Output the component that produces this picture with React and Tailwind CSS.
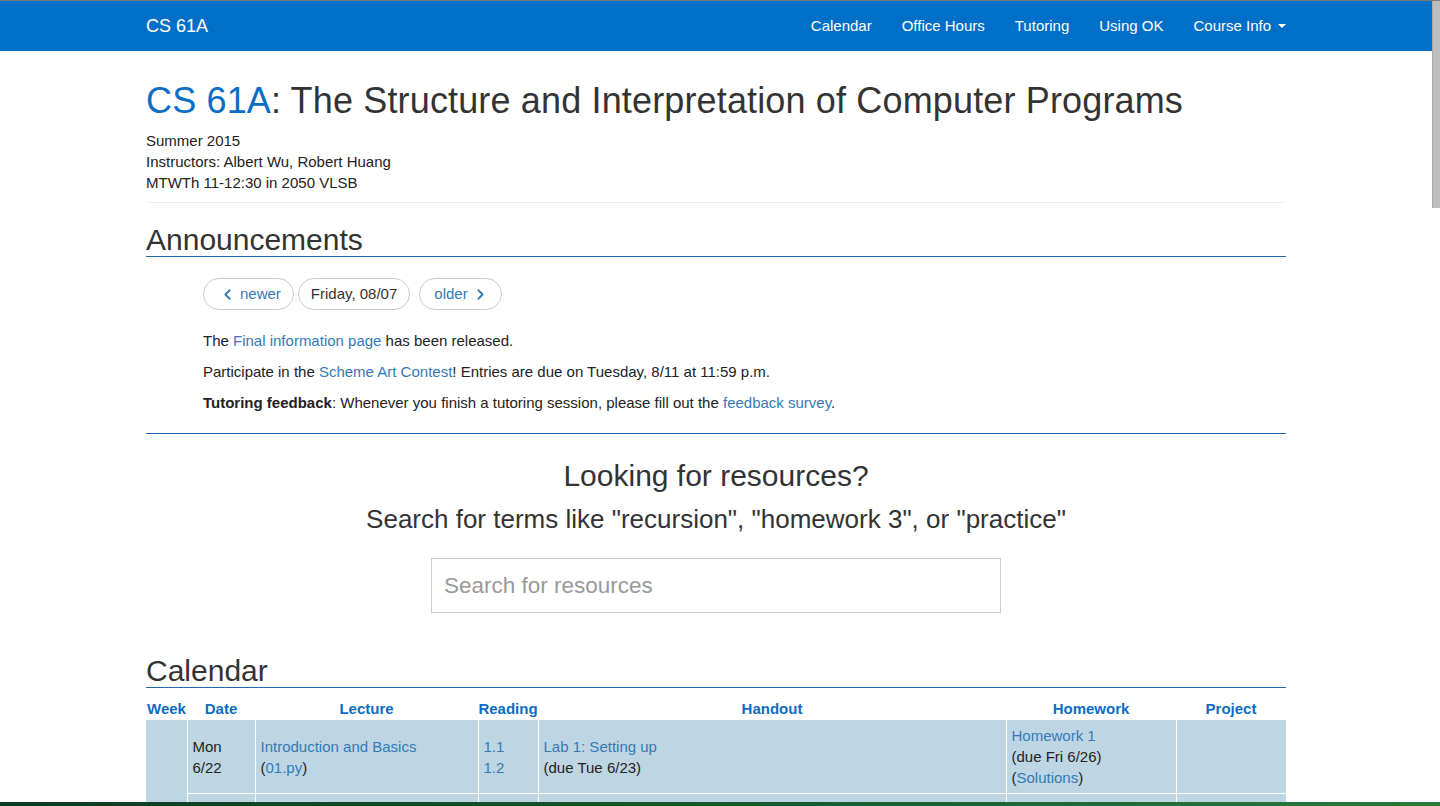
import React from 'react';
import { ChevronLeft, ChevronRight } from 'lucide-react';

const font = { fontFamily: '"Liberation Sans", Arial, sans-serif' };

const navLinks = ['Calendar', 'Office Hours', 'Tutoring', 'Using OK'];

const A = ({ children }) => (
  <a href="#" className="text-[#337ab7]">{children}</a>
);

const Navbar = () => (
  <div className="h-[50px] bg-[#006fc7] text-white flex items-center px-[146px]">
    <span className="text-[18px]">CS 61A</span>
    <div className="ml-auto flex items-center gap-[30px] text-[15px]">
      {navLinks.map((l) => (
        <span key={l}>{l}</span>
      ))}
      <span className="flex items-center">
        Course Info
        <span className="inline-block w-0 h-0 ml-[7px] border-x-4 border-x-transparent border-t-4 border-t-white" />
      </span>
    </div>
  </div>
);

const Header = () => (
  <div>
    <h1 className="text-[36px] leading-[40px] mt-[30px] mb-[9px] text-[#333] tracking-[0.15px]">
      <span className="text-[#0c6dc5]">CS 61A</span>: The Structure and Interpretation of Computer Programs
    </h1>
    <div className="text-[15px] leading-[21px] text-[#222]">
      <div>Summer 2015</div>
      <div>Instructors: Albert Wu, Robert Huang</div>
      <div>MTWTh 11-12:30 in 2050 VLSB</div>
    </div>
    <div className="h-px bg-[#eee] mt-[9px]" />
  </div>
);

const Announcements = () => (
  <div>
    <h2 className="text-[30px] leading-[33px] mt-[20px] text-[#333] border-b border-[#1e69b0]">Announcements</h2>
    <div className="pl-[57px]">
      <div className="flex items-center mt-[21px]">
        <button className="h-[32px] pl-[15px] pr-[12px] rounded-full border border-[#ccc] text-[15px] text-[#337ab7] flex items-center gap-[4px]">
          <ChevronLeft size={17} strokeWidth={2.5} /> newer
        </button>
        <button className="h-[32px] px-[12px] ml-[4px] rounded-full border border-[#ccc] text-[15px] text-[#333]">
          Friday, 08/07
        </button>
        <button className="h-[32px] pl-[14px] pr-[12px] ml-[9px] rounded-full border border-[#ccc] text-[15px] text-[#337ab7] flex items-center gap-[4px]">
          older <ChevronRight size={17} strokeWidth={2.5} />
        </button>
      </div>
      <div className="text-[15px] leading-[21px] text-[#222] mt-[20px]">
        <p className="mb-[10px]">
          The <A>Final information page</A> has been released.
        </p>
        <p className="mb-[10px]">
          Participate in the <A>Scheme Art Contest</A>! Entries are due on Tuesday, 8/11 at 11:59 p.m.
        </p>
        <p className="mb-[10px]">
          <b>Tutoring feedback</b>: Whenever you finish a tutoring session, please fill out the <A>feedback survey</A>.
        </p>
      </div>
    </div>
    <div className="h-px bg-[#1e69b0] mt-[20px]" />
  </div>
);

const Search = () => (
  <div className="flex flex-col items-center text-[#333]">
    <h2 className="text-[30px] leading-[33px] mt-[25px]">Looking for resources?</h2>
    <h3 className="text-[26px] leading-[28px] mt-[13px]">
      Search for terms like "recursion", "homework 3", or "practice"
    </h3>
    <input
      className="mt-[25px] w-[570px] h-[55px] border border-[#ccc] px-[12px] text-[22.5px] placeholder:text-[#999] outline-none"
      placeholder="Search for resources"
      style={font}
    />
  </div>
);

const cols = ['Week', 'Date', 'Lecture', 'Reading', 'Handout', 'Homework', 'Project'];

const cell = 'border border-white border-t-0 px-[5px] py-[5px]';

const Calendar = () => (
  <div>
    <h2 className="text-[30px] leading-[33px] mt-[41px] text-[#333] border-b border-[#1e69b0]">Calendar</h2>
    <table className="w-full border-collapse table-fixed mt-[9px] text-[15px] leading-[21px]">
      <colgroup>
        <col className="w-[41px]" />
        <col className="w-[68px]" />
        <col className="w-[223px]" />
        <col className="w-[60px]" />
        <col className="w-[468px]" />
        <col className="w-[170px]" />
        <col className="w-[110px]" />
      </colgroup>
      <thead>
        <tr className="h-[23px]">
          {cols.map((c) => (
            <th key={c} className="text-center font-bold text-[#0c6dc5] p-0 leading-[21px]">{c}</th>
          ))}
        </tr>
      </thead>
      <tbody className="text-[#222]">
        <tr className="bg-[#bed6e3] align-middle">
          <td rowSpan={2} />
          <td className={cell}>Mon<br />6/22</td>
          <td className={cell}>
            <A>Introduction and Basics</A><br />(<A>01.py</A>)
          </td>
          <td className={cell}>
            <A>1.1</A><br /><A>1.2</A>
          </td>
          <td className={cell}>
            <A>Lab 1: Setting up</A><br />(due Tue 6/23)
          </td>
          <td className={`${cell} align-top`}>
            <A>Homework 1</A><br />(due Fri 6/26)<br />(<A>Solutions</A>)
          </td>
          <td className="border-b border-white" />
        </tr>
        <tr className="bg-[#bed6e3] h-[73px]">
          <td className={cell} />
          <td className={cell} />
          <td className={cell} />
          <td className={cell} />
          <td className={cell} />
          <td />
        </tr>
      </tbody>
    </table>
  </div>
);

export default function App() {
  return (
    <div className="w-[1440px] h-[806px] flex flex-col overflow-hidden bg-white" style={font}>
      <div className="h-px bg-[#7a7a7a] shrink-0" />
      <div className="flex flex-1 min-h-0">
        <div className="flex-1 min-w-0 overflow-hidden">
          <Navbar />
          <div className="w-[1140px] mx-auto">
            <Header />
            <Announcements />
            <Search />
            <Calendar />
          </div>
        </div>
        <div className="w-[8px] shrink-0 flex flex-col">
          <div className="h-[207px] bg-[#bdbdbd] border-l border-[#aaa]" />
        </div>
      </div>
      <div className="h-[4px] shrink-0 bg-gradient-to-r from-[#0b3a21] via-[#145a2c] to-[#2a7a3c]" />
    </div>
  );
}
